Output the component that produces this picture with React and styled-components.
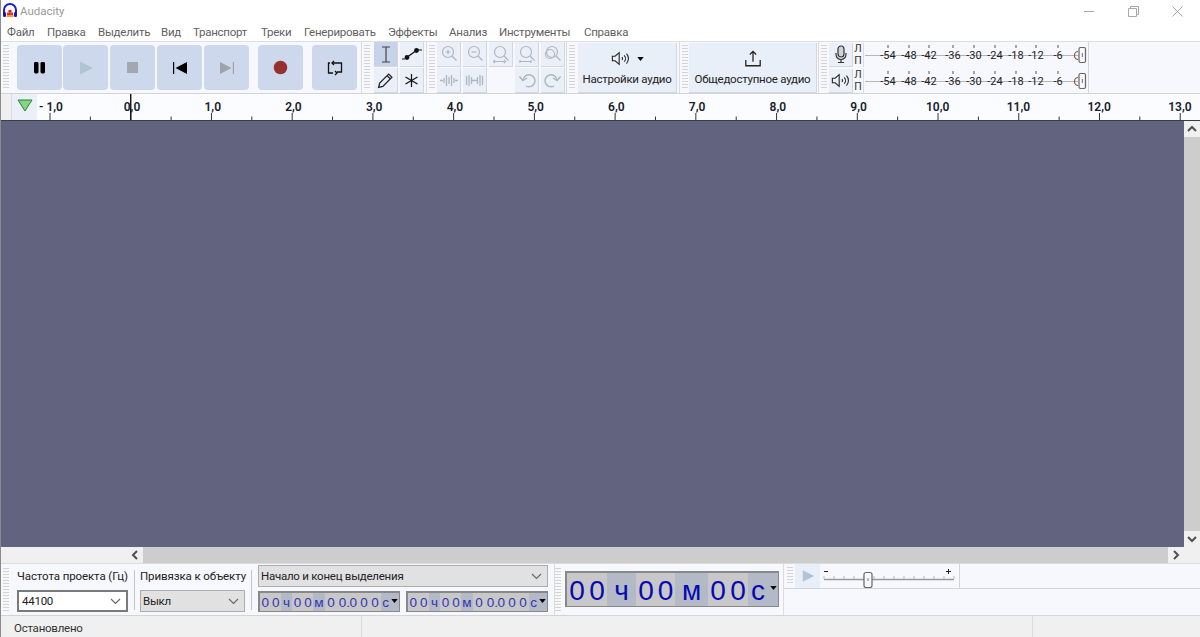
import React from "react";
import styled, { createGlobalStyle } from "styled-components";

const UI = `Roboto, "Noto Sans", "Liberation Sans", sans-serif`;

const Global = createGlobalStyle`
  html, body { margin: 0; padding: 0; background: #fff; }
  body { font-family: ${UI}; font-size: 11.5px; letter-spacing: -0.25px; overflow: hidden; }
  * { box-sizing: border-box; }
`;

const Page = styled.div`
  width: 1200px; height: 637px; display: flex; flex-direction: column;
  border-left: 1px solid #8a8a8a; background: #fff; overflow: hidden;
`;
const TitleBar = styled.div`
  height: 22px; flex: none; display: flex; align-items: center; padding-left: 1px; gap: 2px; color: #9a9a9a; font-size: 11.5px; letter-spacing: 0;
`;
const WindowControls = styled.div`
  margin-left: auto; margin-right: 1px; display: flex; align-items: center; height: 22px; color: #a8a8a8;
`;
const WinButton = styled.div`
  width: 44px; display: flex; justify-content: center; align-items: center;
`;
const MenuBar = styled.div`
  height: 19px; flex: none; display: flex; align-items: center; padding-left: 6px; color: #5f5f5f;
`;
const MenuItem = styled.span`
  width: ${p => p.$w}px; flex: none; white-space: nowrap;
`;
const Dock = styled.div`
  height: 53px; flex: none; display: flex; background: #f7f8fd; border-top: 1px solid #dedede; border-bottom: 1px solid #d4d4d4;
`;
const Group = styled.div`
  width: ${p => p.$w}px; flex: none; display: flex; align-items: center; padding-left: ${p => p.$pl ?? 2}px; border-right: 1px solid #dcdcdc;
`;
const Grip = styled.div`
  width: 6px; flex: none; align-self: stretch; margin: 3px 0;
  background: repeating-linear-gradient(to bottom, #d4d4d4 0 1px, #f7f8fd 1px 3px);
`;
const Row = styled.div`
  display: flex; align-items: center; margin-left: ${p => p.$ml ?? 0}px;
`;
const TransportButton = styled.div`
  width: 45px; height: 45px; flex: none; margin-left: ${p => p.$ml ?? 0}px; border-radius: 4px; background: #cdd8ed;
  display: flex; align-items: center; justify-content: center;
`;
const ToolGrid = styled.div`
  display: grid; grid-template-columns: repeat(${p => p.$cols}, 24px); grid-auto-rows: 25px; column-gap: ${p => p.$cgap ?? 2}px; row-gap: 1px; margin-left: ${p => p.$ml ?? 4}px;
`;
const ToolButton = styled.div`
  display: flex; align-items: center; justify-content: center;
  background: ${p => p.$on ? "#c6d3e9" : p.$blank ? "transparent" : "#eaeff8"};
  border-right: 1px solid ${p => p.$blank ? "transparent" : "#d3d7df"};
  border-bottom: 1px solid ${p => p.$blank ? "transparent" : "#d3d7df"};
`;
const WideButton = styled.div`
  width: ${p => p.$w}px; height: 50px; flex: none; margin-left: ${p => p.$ml}px; background: #e9eff9; color: #222;
  border-right: 1px solid #d3d7df; border-bottom: 1px solid #d3d7df;
  display: flex; flex-direction: column; align-items: center; justify-content: space-between; padding: 5px 0 6px; white-space: nowrap;
`;
const IconLine = styled.div`
  display: flex; align-items: center; gap: 6px; height: 22px;
`;
const MeterGroup = styled.div`
  width: 270px; flex: none; display: flex; padding-left: 2px; border-right: 1px solid #dcdcdc;
`;
const MeterRows = styled.div`
  display: flex; flex-direction: column; gap: 2px; margin-left: 2px; justify-content: center;
`;
const MeterRow = styled.div`
  display: flex; height: 24px;
`;
const MeterButton = styled.div`
  width: 24px; flex: none; background: #eaeff8; border-right: 1px solid #d3d7df; border-bottom: 1px solid #d3d7df; display: flex; align-items: center; justify-content: center;
`;
const MeterLetters = styled.div`
  width: 11px; flex: none; display: flex; flex-direction: column; align-items: center; font-size: 10.5px; letter-spacing: 0; line-height: 12.5px; color: #333; border-right: 1px solid #dcdcdc;
`;
const RulerWrap = styled.div`
  height: 27px; flex: none; display: flex; background: #f0f0f0; border-bottom: 1px solid #3a3a44;
`;
const RulerGutter = styled.div`
  width: 11px; flex: none; border-right: 1px solid #dcdcdc;
`;
const RulerButton = styled.div`
  width: 25px; flex: none; background: #eaeff8; display: flex; align-items: center; justify-content: center; padding-bottom: 3px;
`;
const RulerCanvas = styled.svg`
  flex: 1; display: block; background: #fbfcff; font-family: ${UI}; font-size: 12px; letter-spacing: 0; font-weight: 600;
`;
const Middle = styled.div`
  flex: 1; min-height: 0; display: flex;
`;
const TrackArea = styled.div`
  flex: 1; background: #62637f;
`;
const VScroll = styled.div`
  width: 16px; flex: none; background: #f0f0f0; display: flex; flex-direction: column;
`;
const Arrow = styled.div`
  width: 16px; height: 16px; flex: none; display: flex; align-items: center; justify-content: center; color: #505050;
`;
const VThumb = styled.div`
  flex: 1; background: #cdcdcd;
`;
const HScrollBar = styled.div`
  height: 17px; flex: none; display: flex; background: #f0f0f0; align-items: stretch; border-bottom: 1px solid #dcdcdc;
`;
const HSpacer = styled.div`
  width: ${p => p.$w}px; flex: none; background: #f0f0f0;
`;
const HThumb = styled.div`
  flex: 1; background: #cdcdcd;
`;
const BottomDock = styled.div`
  height: 52px; flex: none; display: flex; background: #f7f8fd; border-bottom: 1px solid #d4d4d4;
`;
const BottomGroup = styled.div`
  width: ${p => p.$w}px; flex: none; display: flex; align-items: stretch; padding: 1px 0 1px ${p => p.$pl ?? 2}px; border-right: 1px solid #dcdcdc;
`;
const FieldCol = styled.div`
  width: ${p => p.$w}px; flex: none; margin-left: ${p => p.$ml ?? 0}px; display: flex; flex-direction: column; gap: 3px;
`;
const FieldLabel = styled.div`
  height: 22px; display: flex; align-items: center; letter-spacing: -0.1px; color: #222; white-space: nowrap;
`;
const VSep = styled.div`
  width: 1px; flex: none; background: #c4c4c4; margin: 5px 0 4px ${p => p.$ml}px;
`;
const Select = styled.div`
  height: 22px; display: flex; align-items: center; justify-content: space-between; padding: 0 5px 0 ${p => p.$white ? 3 : 2}px; color: #222;
  background: ${p => p.$white ? "#fff" : "#e1e1e1"};
  border: ${p => p.$white ? "2px solid #7a7a7a" : "1px solid #adadad"};
`;
const Stack = styled.div`
  width: 290px; margin-left: 6px; flex: none; display: flex; flex-direction: column; gap: 4px;
`;
const TimePair = styled.div`
  display: flex; justify-content: space-between;
`;
const Timer = styled.div`
  width: ${p => p.$w}px; height: ${p => p.$h}px; flex: none; display: flex; background: #c8c8c8; border: 1px solid #888; border-width: 2px 1px 1px 2px; letter-spacing: 0;
  color: ${p => p.$big ? "#0808b4" : "#3434b4"}; font-family: "Liberation Sans", sans-serif; font-size: ${p => p.$big ? 28 : 13.5}px; align-items: stretch;
`;
const Digit = styled.span`
  width: ${p => p.$w}px; flex: none; display: flex; align-items: center; justify-content: center; padding-top: ${p => p.$big ? 2 : 0}px;
  background: ${p => p.$unit ? "#b3b9c6" : "transparent"};
`;
const TimerDrop = styled.span`
  flex: 1; background: #b3b9c6; display: flex; align-items: center; justify-content: center; padding-bottom: 3px; color: #000;
`;
const BigTimerWrap = styled.div`
  margin-left: 4px; padding-top: 6px;
`;
const RightCol = styled.div`
  flex: 1; display: flex; flex-direction: column;
`;
const RightTop = styled.div`
  height: 25px; flex: none; display: flex; border-bottom: 1px solid #d4d4d4;
`;
const PlayGroup = styled.div`
  width: 176px; flex: none; display: flex; padding-left: 3px; border-right: 1px solid #d4d4d4;
`;
const SmallPlay = styled.div`
  width: 25px; flex: none; margin-left: 2px; background: #e9eff9; display: flex; align-items: center; justify-content: center;
`;
const StatusBar = styled.div`
  height: 21px; flex: none; display: flex; background: #f0f0f0; color: #333;
`;
const StatusCell = styled.div`
  width: ${p => p.$w}px; flex: ${p => p.$w ? "none" : 1}; display: flex; align-items: center; padding: 3px 0 0 ${p => p.$pl ?? 0}px; border-right: ${p => p.$line ? "1px solid #dcdcdc" : "none"};
`;
const MeterScale = styled.svg`
  display: block; background: #f7f8fd; font-family: ${UI}; font-size: 11px; letter-spacing: 0;
`;

const AppLogo = () => (
  <svg width="16" height="16" viewBox="0 0 16 16">
    <path d="M2 10V7a6 6 0 0 1 12 0v3" fill="none" stroke="#1d1dc8" strokeWidth="2"/>
    <rect x="1" y="9" width="3" height="5" rx="1.2" fill="#1616b4"/>
    <rect x="12" y="9" width="3" height="5" rx="1.2" fill="#1616b4"/>
    <path d="M4.500 12h7v2h-7z" fill="#f0a030"/>
    <path d="M5 9.500h6V12H5z" fill="#e83020"/>
    <path d="M6.500 7h3v2.500h-3z" fill="#d81818"/>
  </svg>
);

const Pause = () => <svg width="14" height="14" viewBox="0 0 14 14"><rect x="1" y="1" width="4.500" height="11.500" rx="1.4" fill="#000"/><rect x="7.500" y="1" width="4.500" height="11.500" rx="1.4" fill="#000"/></svg>;
const Play = ({ s = 16 }) => <svg width={s} height={s} viewBox="0 0 16 16"><path d="M2 1.500 15 8 2 14.500Z" fill="#afc6d2"/></svg>;
const Stop = () => <svg width="13" height="13" viewBox="0 0 13 13"><rect x="1" y="1" width="11" height="11" fill="#a3a7b0"/></svg>;
const SkipBack = () => <svg width="16" height="14" viewBox="0 0 16 14"><rect x="1" y="1" width="1.2" height="12" fill="#000"/><path d="M15 1v12L3.500 7Z" fill="#000"/></svg>;
const SkipEnd = () => <svg width="16" height="14" viewBox="0 0 16 14"><rect x="13.800" y="1" width="1.2" height="12" fill="#9ea3ab"/><path d="M1 1v12L12.500 7Z" fill="#9ea3ab"/></svg>;
const Rec = () => <svg width="15" height="15" viewBox="0 0 15 15"><circle cx="7.500" cy="7.500" r="6.800" fill="#96302f"/></svg>;
const Loop = () => (
  <svg width="16" height="16" viewBox="0 0 16 16" fill="none" stroke="#111" strokeWidth="1.3">
    <path d="M5 3h9.500v9H10M6 13H1.500V3h1.500"/><path d="M7 1 5 3l2 2M8 11l2 2-2 2"/>
  </svg>
);
const IBeam = () => <svg width="10" height="17" viewBox="0 0 10 17" fill="none" stroke="#444" strokeWidth="1.2"><path d="M1 1h8M1 16h8M5 1v15"/></svg>;
const Envelope = () => <svg width="20" height="14" viewBox="0 0 20 14" fill="#111"><path d="M4 11 15 3" stroke="#111" strokeWidth="1.3"/><circle cx="5" cy="10.500" r="2.400"/><circle cx="14.500" cy="3.500" r="2.400"/><path d="M0 12h3M16 3h4" stroke="#111"/></svg>;
const Pencil = () => <svg width="17" height="17" viewBox="0 0 16 16" fill="none" stroke="#222" strokeWidth="1.2"><path d="M1.500 14.500 2.500 10.500 11 2l3 3-8.500 8.500Z"/><path d="M9.500 3.500l3 3"/></svg>;
const Star = () => <svg width="15" height="15" viewBox="0 0 15 15" stroke="#111" strokeWidth="1.2"><path d="M7.500 1v13M1.500 4l12 7M13.500 4l-12 7"/></svg>;
const Mag = ({ children }) => (
  <svg width="20" height="20" viewBox="0 0 20 20" fill="none" stroke="#aeb7c1" strokeWidth="1.2">
    <circle cx="9" cy="8" r="5.500"/><path d="M13 12l4.500 4.500"/>{children}
  </svg>
);
const TrimIcon = () => <svg width="19" height="13" viewBox="0 0 19 13" stroke="#aeb7c1" strokeWidth="1.3"><path d="M1 6.500h3M5 4v5M7.500 1v11M10 3v7M12.500 1v11M15 4v5M16 6.500h3"/></svg>;
const SilenceIcon = () => <svg width="19" height="13" viewBox="0 0 19 13" stroke="#aeb7c1" strokeWidth="1.3"><path d="M1.500 2v9M4 1v11M6.500 3v7M7 6.500h5M12.500 3v7M15 1v11M17.500 2v9"/></svg>;
const Undo = ({ flip }) => (
  <svg width="18" height="18" viewBox="0 0 18 18" fill="none" stroke="#aeb7c1" strokeWidth="1.4" style={flip ? { transform: "scaleX(-1)" } : undefined}>
    <path d="M5 9A6 6 0 1 1 8 15"/><path d="M1.500 5.500 4.800 9.500 9 7"/>
  </svg>
);
const Speaker = ({ w = 20 }) => (
  <svg width={w} height="15" viewBox="0 0 22 16" fill="none" stroke="#222" strokeWidth="1.2">
    <path d="M1.500 5.500h3L9 1.500v13L4.500 10.500h-3Z"/><path d="M12 6.500a2 2 0 0 1 0 3M14.500 4.500a5 5 0 0 1 0 7M17 2.500a8 8 0 0 1 0 11"/>
  </svg>
);
const Share = () => <svg width="18" height="18" viewBox="0 0 20 20" fill="none" stroke="#222" strokeWidth="1.4"><path d="M10 13V2M6.500 5 10 1.500 13.500 5"/><path d="M2 11v6.500h16V11"/></svg>;
const Mic = () => <svg width="12" height="19" viewBox="0 0 12 19" fill="none" stroke="#333" strokeWidth="1.2"><rect x="3" y="1" width="6" height="11" rx="3" fill="#d0d4da"/><path d="M1 8v1.500a5 5 0 0 0 10 0V8M6 14.500V17M3 17.500h6"/></svg>;
const Chevron = ({ c = "#666" }) => <svg width="11" height="7" viewBox="0 0 11 7" fill="none" stroke={c} strokeWidth="1.1"><path d="M1 1l4.500 4.500L10 1"/></svg>;
const Caret = () => <svg width="7" height="4" viewBox="0 0 8 5"><path d="M0 0h8L4 5Z" fill="#000"/></svg>;
const ScrollChevron = ({ d }) => {
  const paths = { up: "M2 8 6 4l4 4", left: "M8 2 4 6l4 4", right: "M4 2l4 4-4 4", down: "M2 4l4 4 4-4" };
  return <svg width="12" height="12" viewBox="0 0 12 12" fill="none" stroke="currentColor" strokeWidth="2"><path d={paths[d]}/></svg>;
};

const menu = [["Файл",40],["Правка",51],["Выделить",63],["Вид",32],["Транспорт",68],["Треки",43],["Генерировать",84],["Эффекты",61],["Анализ",50],["Инструменты",85],["Справка",60]];

const Ruler = () => {
  const w = 1162, x0 = 12.5, step = 80.73;
  const labels = ["- 1,0","0,0","1,0","2,0","3,0","4,0","5,0","6,0","7,0","8,0","9,0","10,0","11,0","12,0","13,0"];
  return (
    <RulerCanvas width={w} height="26" viewBox={`0 0 ${w} 26`}>
      {labels.map((t, i) => {
        const x = x0 + i * step;
        const tx = i === 0 ? x - 11 : i < 11 ? x - 7 : x - 12;
        return (
          <g key={t}>
            <line x1={x} x2={x} y1="19" y2="26" stroke="#333" />
            <line x1={x + step / 2} x2={x + step / 2} y1="22.5" y2="26" stroke="#333" />
            <text x={tx} y="16.500" fill="#15202b">{t}</text>
          </g>
        );
      })}
      <line x1={x0 + step} x2={x0 + step} y1="0" y2="26" stroke="#111" strokeWidth="1.4" />
    </RulerCanvas>
  );
};

const Meter = () => {
  const pos = [["-54",24],["-48",45],["-42",65],["-36",89],["-30",110],["-24",131],["-18",152],["-12",172],["-6",194]];
  return (
    <MeterScale width="226" height="24" viewBox="0 0 226 24">
      <line x1="1" x2="214" y1="12.5" y2="12.5" stroke="#b5b5b5"/>
      {pos.map(([t, x]) => (
        <g key={t}>
          <line x1={x} x2={x} y1="2" y2="5" stroke="#555"/>
          <text x={x} y="16" textAnchor="middle" fill="#222">{t}</text>
        </g>
      ))}
      <path d="M214 8.500a3.500 4 0 0 0 0 8" fill="none" stroke="#8a5a40" strokeWidth="1.2"/>
      <rect x="215" y="4.5" width="6.5" height="15" rx="1.5" fill="#f7f8fd" stroke="#666" strokeWidth="1.2"/>
      <rect x="217.800" y="10" width="1.2" height="4" fill="#888"/>
      <line x1="224.5" x2="224.5" y1="0" y2="24" stroke="#d4d4d4"/>
    </MeterScale>
  );
};

const TimeCells = ({ cells, big }) => cells.map(([t, w, unit], i) => (
  <Digit key={i} $w={w} $unit={unit} $big={big}>{t}</Digit>
));

const smallCells = [["0",10.5],["0",10.5],["ч",11,1],["0",11],["0",10],["м",12,1],["0",12],["0",11],[".",0],["0",10.5],["0",11],["0",11],["с",10,1]];
const bigCells = [["0",20],["0",20],["ч",29,1],["0",20],["0",19],["м",33,1],["0",20],["0",20],["с",20,1]];

const SmallTimer = () => <Timer $w={142} $h={21}><TimeCells cells={smallCells}/><TimerDrop><Caret/></TimerDrop></Timer>;

export default function App() {
  return (
    <Page>
      <Global/>
      <TitleBar>
        <AppLogo/>Audacity
        <WindowControls>
          <WinButton><svg width="10" height="10" viewBox="0 0 10 10" stroke="currentColor"><path d="M0 5.500h10"/></svg></WinButton>
          <WinButton><svg width="11" height="11" viewBox="0 0 11 11" fill="none" stroke="currentColor"><path d="M.5 2.500h8v8h-8zM2.500 2.500v-2h8v8h-2"/></svg></WinButton>
          <WinButton><svg width="11" height="11" viewBox="0 0 11 11" stroke="currentColor"><path d="M.5.5l10 10M10.500.5l-10 10"/></svg></WinButton>
        </WindowControls>
      </TitleBar>
      <MenuBar>{menu.map(([t, w]) => <MenuItem key={t} $w={w}>{t}</MenuItem>)}</MenuBar>

      <Dock>
        <Group $w={361}>
          <Grip/>
          <Row $ml={8}>
            <TransportButton><Pause/></TransportButton>
            <TransportButton $ml={1}><Play/></TransportButton>
            <TransportButton $ml={2}><Stop/></TransportButton>
            <TransportButton $ml={2}><SkipBack/></TransportButton>
            <TransportButton $ml={2}><SkipEnd/></TransportButton>
            <TransportButton $ml={9}><Rec/></TransportButton>
            <TransportButton $ml={9}><Loop/></TransportButton>
          </Row>
        </Group>
        <Group $w={65}>
          <Grip/>
          <ToolGrid $cols={2}>
            <ToolButton $on><IBeam/></ToolButton>
            <ToolButton><Envelope/></ToolButton>
            <ToolButton><Pencil/></ToolButton>
            <ToolButton><Star/></ToolButton>
          </ToolGrid>
        </Group>
        <Group $w={140}>
          <Grip/>
          <ToolGrid $cols={5} $ml={2}>
            <ToolButton><Mag><path d="M6.500 8h5M9 5.500v5"/></Mag></ToolButton>
            <ToolButton><Mag><path d="M6.500 8h5"/></Mag></ToolButton>
            <ToolButton><Mag><path d="M4 17.500h9M4 16l-1.500 1.500L4 19M13 16l1.500 1.500L13 19"/></Mag></ToolButton>
            <ToolButton><Mag><path d="M3 16v3M3 17.500h11M14 16v3"/></Mag></ToolButton>
            <ToolButton><Mag><circle cx="7" cy="10" r="4.500"/></Mag></ToolButton>
            <ToolButton><TrimIcon/></ToolButton>
            <ToolButton><SilenceIcon/></ToolButton>
            <ToolButton $blank/>
            <ToolButton><Undo/></ToolButton>
            <ToolButton><Undo flip/></ToolButton>
          </ToolGrid>
        </Group>
        <Group $w={113}>
          <Grip/>
          <WideButton $w={99} $ml={3}>
            <IconLine><Speaker/><Caret/></IconLine>
            Настройки аудио
          </WideButton>
        </Group>
        <Group $w={139}>
          <Grip/>
          <WideButton $w={128} $ml={1}>
            <IconLine><Share/></IconLine>
            Общедоступное аудио
          </WideButton>
        </Group>
        <MeterGroup>
          <Grip/>
          <MeterRows>
            <MeterRow><MeterButton><Mic/></MeterButton><MeterLetters>Л<br/>П</MeterLetters><Meter/></MeterRow>
            <MeterRow><MeterButton><Speaker w={20}/></MeterButton><MeterLetters>Л<br/>П</MeterLetters><Meter/></MeterRow>
          </MeterRows>
        </MeterGroup>
      </Dock>

      <RulerWrap>
        <RulerGutter/>
        <RulerButton><svg width="16" height="13" viewBox="0 0 16 13"><path d="M1 1h14L8 12Z" fill="#7fd77f" stroke="#2f7f3f"/></svg></RulerButton>
        <Ruler/>
      </RulerWrap>

      <Middle>
        <TrackArea/>
        <VScroll>
          <Arrow><ScrollChevron d="up"/></Arrow>
          <VThumb/>
          <Arrow><ScrollChevron d="down"/></Arrow>
        </VScroll>
      </Middle>
      <HScrollBar>
        <HSpacer $w={126}/>
        <Arrow><ScrollChevron d="left"/></Arrow>
        <HThumb/>
        <Arrow><ScrollChevron d="right"/></Arrow>
        <HSpacer $w={16}/>
      </HScrollBar>

      <BottomDock>
        <BottomGroup $w={554}>
          <Grip/>
          <FieldCol $w={111} $ml={8}>
            <FieldLabel>Частота проекта (Гц)</FieldLabel>
            <Select $white>44100<Chevron/></Select>
          </FieldCol>
          <VSep $ml={6}/>
          <FieldCol $w={105} $ml={5}>
            <FieldLabel>Привязка к объекту</FieldLabel>
            <Select>Выкл<Chevron/></Select>
          </FieldCol>
          <VSep $ml={6}/>
          <Stack>
            <Select>Начало и конец выделения<Chevron/></Select>
            <TimePair><SmallTimer/><SmallTimer/></TimePair>
          </Stack>
        </BottomGroup>
        <BottomGroup $w={229} $pl={0}>
          <Grip/>
          <BigTimerWrap>
            <Timer $w={214} $h={36} $big><TimeCells cells={bigCells} big/><TimerDrop><Caret/></TimerDrop></Timer>
          </BigTimerWrap>
        </BottomGroup>
        <RightCol>
          <RightTop>
            <PlayGroup>
              <Grip/>
              <SmallPlay><Play s={14}/></SmallPlay>
              <svg width="136" height="24" viewBox="0 0 136 24" stroke="#555" fill="none">
                <path d="M4 7.500h4M126 7.500h5M128.500 5v5" stroke="#222"/>
                <path d="M4 15.500h130" stroke="#999" strokeWidth="1.500"/>
                {Array.from({ length: 14 }, (_, i) => <path key={i} d={`M${4 + i * 10} 12v3`} stroke="#bbb"/>)}
                <rect x="44" y="8.500" width="8" height="15" rx="2" fill="#f7f8fd" stroke="#666" strokeWidth="1.200"/>
                <path d="M48 14v3" stroke="#777"/>
              </svg>
            </PlayGroup>
          </RightTop>
        </RightCol>
      </BottomDock>

      <StatusBar>
        <StatusCell $w={361} $pl={13} $line>Остановлено</StatusCell>
        <StatusCell $w={671} $line/>
        <StatusCell/>
      </StatusBar>
    </Page>
  );
}
